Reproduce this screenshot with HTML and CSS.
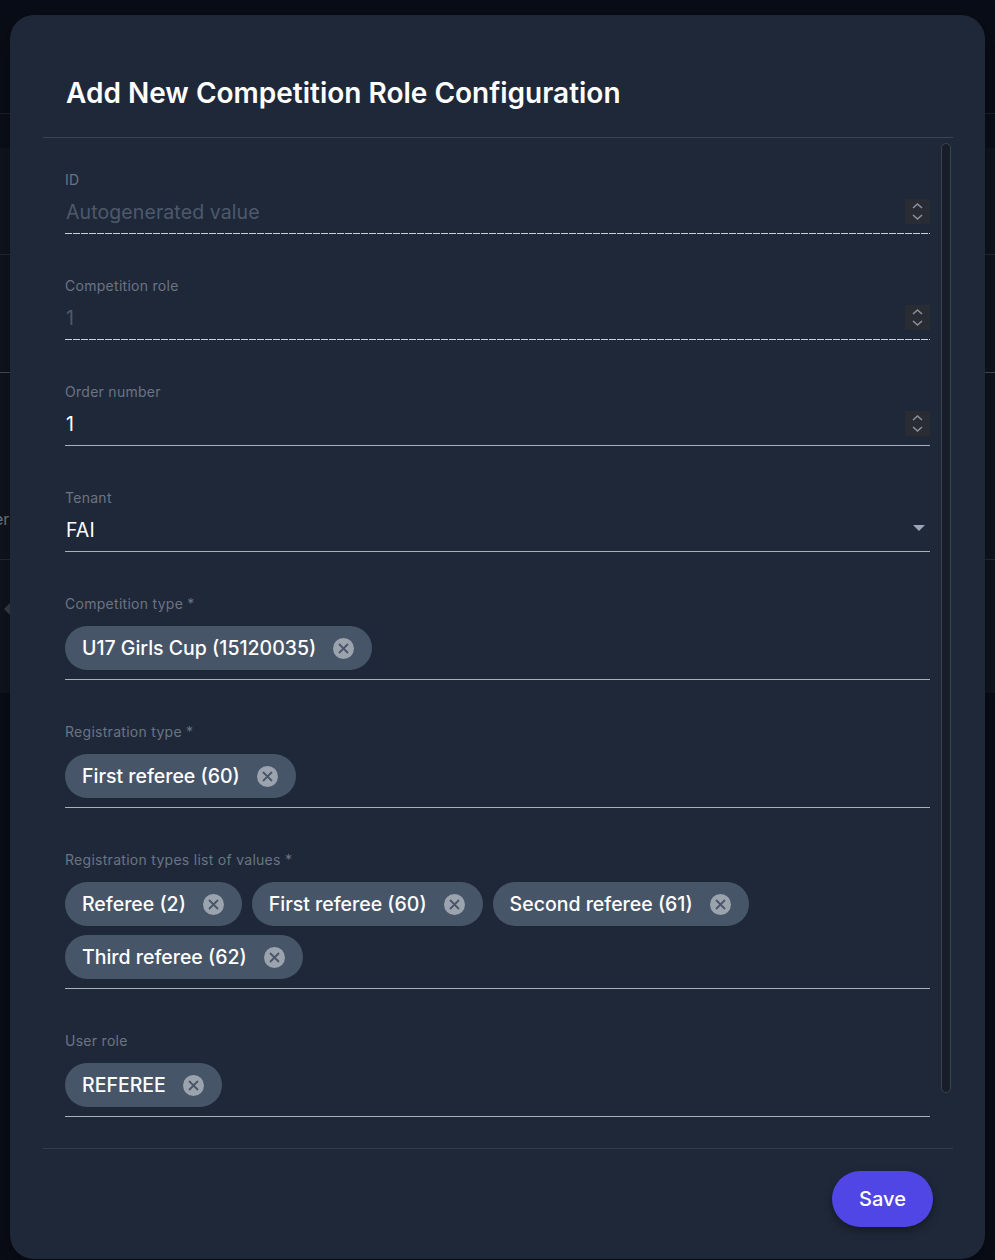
FILE: index.html
```html
<!DOCTYPE html>
<html lang="en">
<head>
<meta charset="utf-8">
<title>Add New Competition Role Configuration</title>
<link rel="stylesheet" href="styles.css">
</head>
<body>
<div class="page">
  <div class="topbar"></div>
  <div class="subbar"></div>
  <div class="panel">
    <div class="prow r1"></div>
    <div class="prow r2"></div>
    <div class="prow r3"><span class="ghost">er</span></div>
    <div class="prow r4"><span class="ghost-arrow"></span></div>
  </div>
</div>

<div class="modal">
  <div class="modal-header">
    <h1 class="title">Add New Competition Role Configuration</h1>
  </div>
  <div class="modal-body">
    <div class="form">
      <div class="field">
        <div class="label">ID</div>
        <div class="control disabled">
          <span class="value placeholder">Autogenerated value</span>
          <span class="spin"><svg width="25" height="25" viewBox="0 0 25 25"><path d="M8 9 L12.5 5 L17 9" fill="none" stroke="#8c909a" stroke-width="1.6"/><path d="M8 16 L12.5 20 L17 16" fill="none" stroke="#8c909a" stroke-width="1.6"/></svg></span>
        </div>
      </div>
      <div class="field">
        <div class="label">Competition role</div>
        <div class="control disabled">
          <span class="value placeholder">1</span>
          <span class="spin"><svg width="25" height="25" viewBox="0 0 25 25"><path d="M8 9 L12.5 5 L17 9" fill="none" stroke="#8c909a" stroke-width="1.6"/><path d="M8 16 L12.5 20 L17 16" fill="none" stroke="#8c909a" stroke-width="1.6"/></svg></span>
        </div>
      </div>
      <div class="field">
        <div class="label">Order number</div>
        <div class="control">
          <span class="value">1</span>
          <span class="spin"><svg width="25" height="25" viewBox="0 0 25 25"><path d="M8 9 L12.5 5 L17 9" fill="none" stroke="#8c909a" stroke-width="1.6"/><path d="M8 16 L12.5 20 L17 16" fill="none" stroke="#8c909a" stroke-width="1.6"/></svg></span>
        </div>
      </div>
      <div class="field">
        <div class="label">Tenant</div>
        <div class="control">
          <span class="value">FAI</span>
          <svg class="caret" width="12" height="6" viewBox="0 0 12 6"><path d="M0 0 H12 L6 6 Z" fill="#9aa6b8"/></svg>
        </div>
      </div>
      <div class="field">
        <div class="label">Competition type *</div>
        <div class="chips">
          <span class="chip">U17 Girls Cup (15120035)<span class="x"><svg width="21" height="21" viewBox="0 0 21 21"><circle cx="10.5" cy="10.5" r="10.5" fill="#9ba3ae"/><path d="M6 6 L15 15 M15 6 L6 15" stroke="#4a5668" stroke-width="1.8"/></svg></span></span>
        </div>
      </div>
      <div class="field">
        <div class="label">Registration type *</div>
        <div class="chips">
          <span class="chip">First referee (60)<span class="x"><svg width="21" height="21" viewBox="0 0 21 21"><circle cx="10.5" cy="10.5" r="10.5" fill="#9ba3ae"/><path d="M6 6 L15 15 M15 6 L6 15" stroke="#4a5668" stroke-width="1.8"/></svg></span></span>
        </div>
      </div>
      <div class="field">
        <div class="label">Registration types list of values *</div>
        <div class="chips">
          <span class="chip">Referee (2)<span class="x"><svg width="21" height="21" viewBox="0 0 21 21"><circle cx="10.5" cy="10.5" r="10.5" fill="#9ba3ae"/><path d="M6 6 L15 15 M15 6 L6 15" stroke="#4a5668" stroke-width="1.8"/></svg></span></span>
          <span class="chip">First referee (60)<span class="x"><svg width="21" height="21" viewBox="0 0 21 21"><circle cx="10.5" cy="10.5" r="10.5" fill="#9ba3ae"/><path d="M6 6 L15 15 M15 6 L6 15" stroke="#4a5668" stroke-width="1.8"/></svg></span></span>
          <span class="chip">Second referee (61)<span class="x"><svg width="21" height="21" viewBox="0 0 21 21"><circle cx="10.5" cy="10.5" r="10.5" fill="#9ba3ae"/><path d="M6 6 L15 15 M15 6 L6 15" stroke="#4a5668" stroke-width="1.8"/></svg></span></span>
          <span class="chip">Third referee (62)<span class="x"><svg width="21" height="21" viewBox="0 0 21 21"><circle cx="10.5" cy="10.5" r="10.5" fill="#9ba3ae"/><path d="M6 6 L15 15 M15 6 L6 15" stroke="#4a5668" stroke-width="1.8"/></svg></span></span>
        </div>
      </div>
      <div class="field">
        <div class="label">User role</div>
        <div class="chips">
          <span class="chip">REFEREE<span class="x"><svg width="21" height="21" viewBox="0 0 21 21"><circle cx="10.5" cy="10.5" r="10.5" fill="#9ba3ae"/><path d="M6 6 L15 15 M15 6 L6 15" stroke="#4a5668" stroke-width="1.8"/></svg></span></span>
        </div>
      </div>
    </div>
    <div class="scrollbar"><div class="thumb"></div></div>
  </div>
  <div class="modal-footer">
    <button class="save" type="button">Save</button>
  </div>
</div>
</body>
</html>
```

FILE: styles.css
```css
* { box-sizing: border-box; }

html, body {
  margin: 0;
  padding: 0;
  background: #090d17;
  font-family: Inter, "Noto Sans", sans-serif;
  overflow: hidden;
}

.page {
  width: 995px;
  height: 1260px;
  display: flex;
  flex-direction: column;
}

.topbar {
  height: 114px;
  border-bottom: 1px solid #1d222d;
  background: #090d17;
}

.subbar {
  height: 34px;
  background: #0b0f19;
}

.panel {
  display: flex;
  flex-direction: column;
  background: #10151f;
}

.prow {
  border-bottom: 1px solid #232936;
  position: relative;
}

.r1 { height: 107px; }
.r2 { height: 118px; border-bottom-color: #4a4f5a; }
.r3 { height: 187px; border-bottom-color: #262c38; }
.r4 { height: 133px; border-bottom: none; }

.ghost {
  display: block;
  padding-top: 136px;
  margin-left: -6px;
  color: #7a808b;
  font-size: 16px;
  line-height: 20px;
}

.ghost-arrow {
  display: block;
  margin-top: 43px;
  margin-left: 4px;
  width: 0;
  height: 0;
  border-top: 6px solid transparent;
  border-bottom: 6px solid transparent;
  border-right: 6px solid #3a404b;
}

.modal {
  position: absolute;
  left: 10px;
  top: 15px;
  width: 975px;
  height: 1244px;
  background: #1f2839;
  border-radius: 24px;
  display: flex;
  flex-direction: column;
  padding: 0 32px 0 33px;
  box-shadow: 0 10px 30px rgba(0, 0, 0, 0.4);
}

.modal-header {
  padding: 60px 23px 26px;
  border-bottom: 1px solid #3a4353;
}

.title {
  margin: 0;
  font-size: 28px;
  line-height: 36px;
  font-weight: 600;
  color: #ffffff;
  letter-spacing: 0;
}

.modal-body {
  height: 1010px;
  display: flex;
  overflow: hidden;
}

.form {
  width: 887px;
  padding: 32px 0 0 22px;
  display: flex;
  flex-direction: column;
  gap: 42px;
}

.label {
  font-size: 14px;
  line-height: 20px;
  color: #6b7483;
  letter-spacing: 0.28px;
}

.control {
  height: 44px;
  display: flex;
  align-items: center;
  justify-content: space-between;
  border-bottom: 1px solid #a9b0ba;
}

.control.disabled {
  border-bottom: none;
  padding-bottom: 1px;
  background-image: repeating-linear-gradient(to right, #c9cfd6 0 7px, transparent 7px 8px);
  background-size: 100% 1px;
  background-position: bottom left;
  background-repeat: no-repeat;
}

.value {
  font-size: 19.5px;
  line-height: 28px;
  color: #ffffff;
  padding-left: 1px;
  padding-top: 1px;
  letter-spacing: 0.1px;
}

.value.placeholder {
  color: #4d596b;
}

.spin {
  width: 25px;
  height: 25px;
  background: #2a2c34;
  display: flex;
}

.caret {
  margin-right: 5px;
  margin-bottom: 3px;
}

.chips {
  display: flex;
  flex-wrap: wrap;
  gap: 9px 10px;
  padding: 12px 0 9px;
  border-bottom: 1px solid #a9b0ba;
}

.chip {
  height: 44px;
  display: inline-flex;
  align-items: center;
  gap: 17px;
  padding: 0 18px 0 17px;
  border-radius: 22px;
  background: #475569;
  color: #ffffff;
  font-size: 19.5px;
  font-weight: 500;
  white-space: nowrap;
}

.x {
  display: flex;
  width: 21px;
  height: 21px;
}

.scrollbar {
  width: 10px;
  margin-left: 11px;
  padding-top: 5px;
}

.thumb {
  height: 950px;
  border: 1px solid #3a4352;
  border-radius: 5px;
  background: #171e29;
}

.modal-footer {
  flex: 1;
  border-top: 1px solid #343d4c;
  display: flex;
  justify-content: flex-end;
  align-items: flex-start;
  padding: 22px 20px 0 0;
}

.save {
  width: 101px;
  height: 56px;
  border: none;
  border-radius: 28px;
  background: #4f46e5;
  color: #ffffff;
  font-family: Inter, "Noto Sans", sans-serif;
  font-size: 20px;
  font-weight: 500;
  box-shadow: 0 4px 8px rgba(0, 0, 0, 0.35);
  cursor: pointer;
}
```
